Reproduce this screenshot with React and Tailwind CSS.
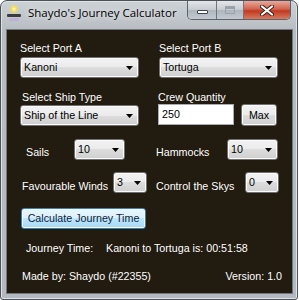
import React from 'react';

const uiFont = "font-['Liberation_Sans',Arial,sans-serif] text-[10.7px]";

const Arrow = () => (
  <svg width="7" height="4" viewBox="0 0 7 4" className="shrink-0">
    <path d="M0 0h7L3.5 4z" fill="#000" />
  </svg>
);

const Combo = ({ value, w, className = '' }) => (
  <div
    className={`flex h-[21px] shrink-0 items-center rounded-[3px] border border-[#707070] bg-[linear-gradient(#f2f2f2_0%,#ebebeb_50%,#dddddd_50%,#cfcfcf_100%)] pl-[3px] pr-[5px] text-black shadow-[inset_0_0_0_1px_#fbfbfb] ${w} ${className}`}
  >
    <span className="flex-1 leading-none">{value}</span>
    <Arrow />
  </div>
);

const AppIcon = () => (
  <svg width="16" height="18" viewBox="0 0 16 18" className="ml-[5px] mt-[3px] shrink-0">
    <defs>
      <radialGradient id="glow" cx="0.5" cy="0.5" r="0.5">
        <stop offset="0" stopColor="#fffbd0" />
        <stop offset="0.5" stopColor="#f1dc5a" />
        <stop offset="1" stopColor="#f1dc5a" stopOpacity="0" />
      </radialGradient>
    </defs>
    <circle cx="8" cy="5" r="5" fill="url(#glow)" />
    <rect x="1" y="10" width="14" height="3" rx="1" fill="#3d3d3d" />
    <rect x="3" y="14" width="10" height="3" rx="1.5" fill="#b9a9d8" opacity="0.7" />
  </svg>
);

const WindowButtons = () => (
  <div className="ml-auto mr-[6px] flex h-[19px] overflow-hidden rounded-b-[5px] border border-t-0 border-[#5b636c]">
    <div className="flex w-[29px] items-center justify-center border-r border-[#6d757e] bg-[linear-gradient(#e3e6e9,#c6cbd1_50%,#aeb5bd_50%,#c3c9cf)]">
      <div className="mt-[3px] h-[4px] w-[11px] rounded-[1px] border border-[#3c434b] bg-white" />
    </div>
    <div className="flex w-[27px] items-center justify-center border-r border-[#6d757e] bg-[linear-gradient(#e3e6e9,#c6cbd1_50%,#aeb5bd_50%,#c3c9cf)]">
      <div className="h-[8px] w-[10px] border border-[#9aa1a8] shadow-[inset_0_2px_0_#9aa1a8]" />
    </div>
    <div className="flex w-[46px] items-center justify-center bg-[linear-gradient(#e9a99c,#d0634f_45%,#c0391f_55%,#d87a5f)]">
      <svg width="14" height="11" viewBox="0 0 14 11">
        <path d="M2 1.5l10 8M12 1.5l-10 8" stroke="#3b2320" strokeWidth="4" strokeLinecap="round" />
        <path d="M2 1.5l10 8M12 1.5l-10 8" stroke="#fff" strokeWidth="2.2" strokeLinecap="round" />
      </svg>
    </div>
  </div>
);

export default function App() {
  return (
    <div className="h-[300px] w-[299px] bg-white">
      <div className="flex h-[300px] w-[298px] flex-col rounded-t-[7px] rounded-b-[3px] border border-[#4b5259] bg-[linear-gradient(#cdd2d6,#b7bcc2_30px,#b3b9bf)] shadow-[inset_0_0_0_1px_#dfe3e6]">
        {/* title bar */}
        <div className="flex h-[28px] items-start">
          <AppIcon />
          <div className="ml-[6px] mt-[4px] font-['Open_Sans',sans-serif] text-[11.5px] leading-[16px] text-black [text-shadow:0_0_6px_#ffffff]">
            Shaydo's Journey Calculator
          </div>
          <WindowButtons />
        </div>

        {/* client area */}
        <div className={`ml-[5px] h-[265px] w-[287px] border border-[#6f777f] bg-[#221b10] text-white ${uiFont}`}>
          <div className="grid grid-cols-[139px_1fr] pl-[13px] pt-[12px] leading-[13px]">
            <div>Select Port A</div>
            <div>Select Port B</div>
          </div>
          <div className="mt-[2px] grid grid-cols-[139px_1fr] pl-[13px]">
            <Combo value="Kanoni" w="w-[119px]" />
            <Combo value="Tortuga" w="w-[119px]" />
          </div>

          <div className="mt-[13px] flex leading-[13px]">
            <div className="ml-[15px] w-[136px]">Select Ship Type</div>
            <div>Crew Quantity</div>
          </div>
          <div className="flex items-start">
            <Combo value="Ship of the Line" w="w-[119px]" className="ml-[13px] mt-[1px]" />
            <div className="ml-[19px] flex h-[21px] w-[76px] items-center border border-[#abadb3] bg-white pl-[3px] leading-none text-black">
              250
            </div>
            <div className="ml-[7px] flex h-[22px] w-[36px] items-center justify-center rounded-[3px] border border-[#707070] bg-[linear-gradient(#f2f2f2_0%,#ebebeb_50%,#dddddd_50%,#cfcfcf_100%)] leading-none text-black shadow-[inset_0_0_0_1px_#fbfbfb]">
              Max
            </div>
          </div>

          <div className="mt-[13px] flex items-start leading-[13px]">
            <div className="ml-[19px] mt-[7px] w-[48px]">Sails</div>
            <Combo value="10" w="w-[51px]" />
            <div className="ml-[31px] mt-[7px] w-[71px]">Hammocks</div>
            <Combo value="10" w="w-[51px]" />
          </div>

          <div className="mt-[12px] flex items-start leading-[13px]">
            <div className="ml-[15px] mt-[8px] w-[91px]">Favourable Winds</div>
            <Combo value="3" w="w-[34px]" />
            <div className="ml-[9px] mt-[8px] w-[89px]">Control the Skys</div>
            <Combo value="0" w="w-[34px]" />
          </div>

          <div className="ml-[14px] mt-[15px] flex h-[21px] w-[125px] items-center justify-center rounded-[3px] border border-[#3c7fb1] bg-[linear-gradient(#eaf6fd_0%,#d9f0fc_50%,#bee6fd_50%,#a7d9f5_100%)] leading-none text-[#0c1a3a] shadow-[inset_0_0_0_1px_#f4fbff]">
            Calculate Journey Time
          </div>

          <div className="mt-[13px] flex leading-[13px]">
            <div className="ml-[19px] w-[80px]">Journey Time:</div>
            <div>Kanoni to Tortuga is: 00:51:58</div>
          </div>

          <div className="mt-[15px] flex justify-between pl-[15px] pr-[10px] leading-[13px]">
            <div>Made by: Shaydo (#22355)</div>
            <div>Version: 1.0</div>
          </div>
        </div>
      </div>
    </div>
  );
}
